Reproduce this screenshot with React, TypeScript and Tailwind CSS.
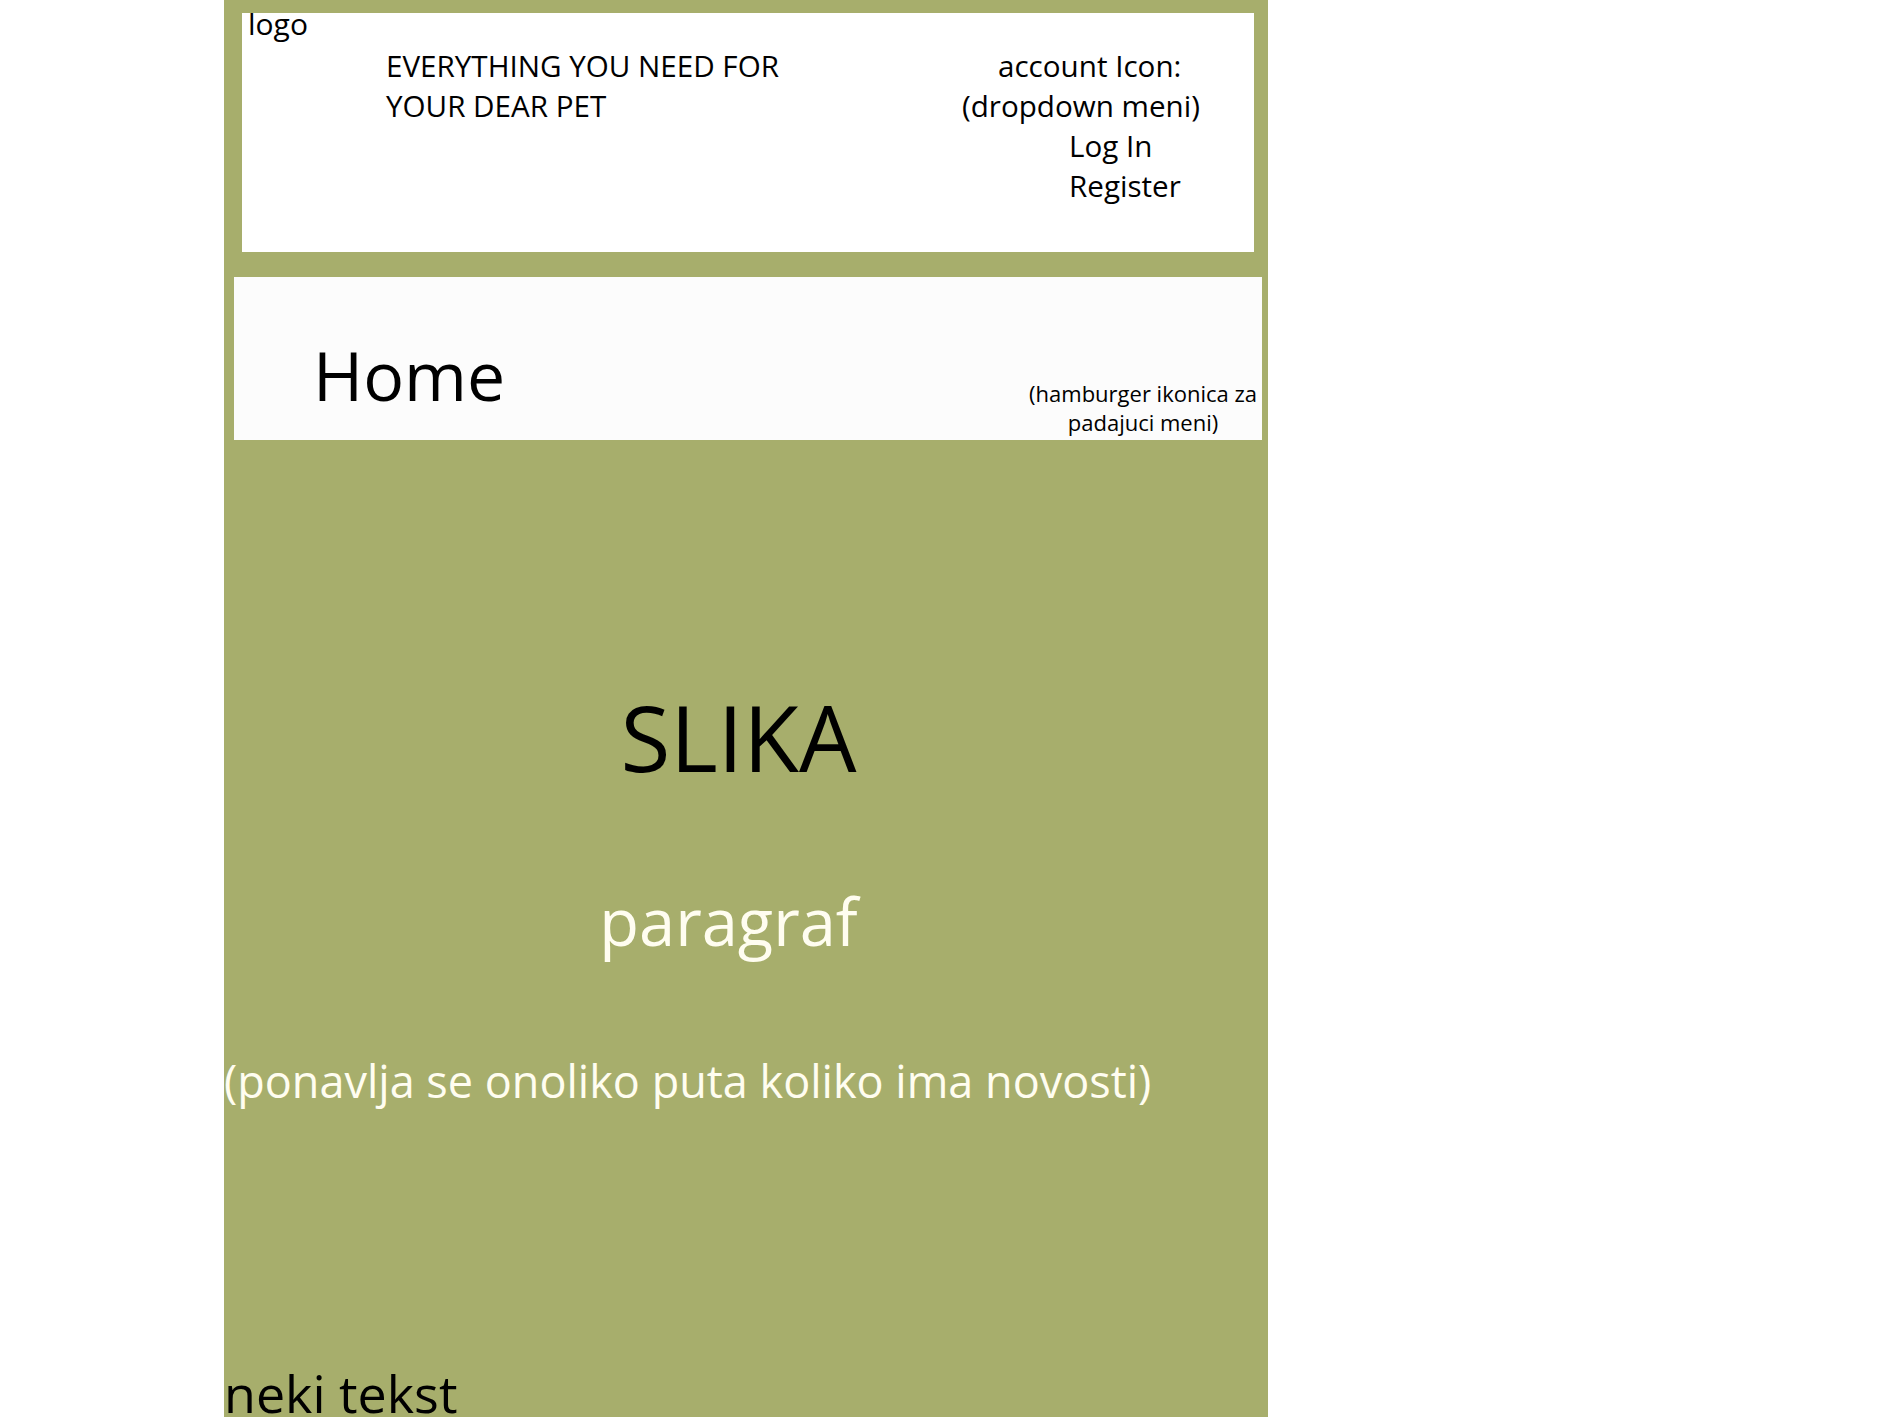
const font = { fontFamily: '"Open Sans", "Noto Sans", sans-serif' };

function Header() {
  return (
    <header className="mt-[13px] ml-[18px] mr-[14px] h-[239px] shrink-0 bg-white text-black flex flex-col">
      <div className="-mt-[4px] pl-[6px] text-[30px] leading-[30px]">logo</div>
      <div className="mt-[7px] flex text-[29.6px] leading-[40px]">
        <div className="ml-[144px] w-[576px]">
          <p>EVERYTHING YOU NEED FOR</p>
          <p>YOUR DEAR PET</p>
        </div>
        <div>
          <p className="pl-[36px]">account Icon:</p>
          <p>(dropdown meni)</p>
          <p className="pl-[107px]">Log In</p>
          <p className="pl-[107px]">Register</p>
        </div>
      </div>
    </header>
  );
}

function NavBar() {
  return (
    <nav className="mt-[25px] ml-[10px] mr-[6px] h-[163px] shrink-0 bg-[#fcfcfc] flex items-start text-black">
      <h1 className="pl-[79px] pt-[64px] text-[68px] leading-[68px]">Home</h1>
      <p className="ml-auto mr-[5px] mt-[102px] text-center text-[22px] leading-[29px]">
        (hamburger ikonica za
        <br />
        padajuci meni)
      </p>
    </nav>
  );
}

function NewsItem() {
  return (
    <section className="shrink-0">
      <h2 className="mt-[252px] pr-[15px] text-center text-[91px] leading-[90px] text-black">SLIKA</h2>
      <p className="mt-[107px] pr-[35px] text-center text-[65px] leading-[65px] text-[#fffdf0]">paragraf</p>
      <p className="mt-[104px] text-[45px] leading-[45px] text-[#fffdf0] whitespace-nowrap">
        (ponavlja se onoliko puta koliko ima novosti)
      </p>
    </section>
  );
}

export default function App() {
  return (
    <div className="min-h-screen bg-white" style={font}>
      <div className="ml-[224px] w-[1044px] h-[1417px] overflow-hidden bg-[#a7ae6c] flex flex-col">
        <Header />
        <NavBar />
        <NewsItem />
        <p className="mt-[264px] shrink-0 text-[52px] leading-[52px] text-black whitespace-nowrap">neki tekst</p>
      </div>
    </div>
  );
}
